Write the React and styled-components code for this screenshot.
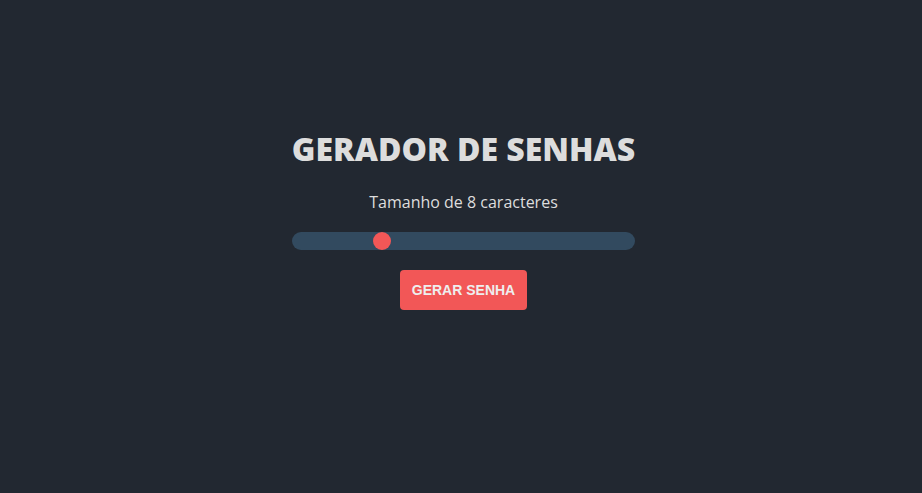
import React, { useState } from "react";
import styled, { createGlobalStyle } from "styled-components";

const Global = createGlobalStyle`
  * { box-sizing: border-box; }
  html, body { margin: 0; padding: 0; }
  body {
    background: #222831;
    font-family: "Open Sans", "Liberation Sans", sans-serif;
    color: #dddddd;
  }
`;

const Page = styled.main`
  min-height: 100vh;
  display: flex;
  align-items: center;
  justify-content: center;
  padding: 0 0 57px 5px;
`;

const Card = styled.section`
  width: 343px;
  display: flex;
  flex-direction: column;
  align-items: center;
`;

const Title = styled.h1`
  margin: 0;
  font-size: 32px;
  font-weight: 800;
  line-height: 44px;
  color: #dddddd;
  white-space: nowrap;
`;

const Label = styled.span`
  margin-top: 20px;
  font-size: 16px;
  line-height: 22px;
  color: #dddddd;
`;

const Slider = styled.input`
  -webkit-appearance: none;
  appearance: none;
  margin: 19px 0 0;
  width: 100%;
  height: 18px;
  border-radius: 9px;
  background: #324a5f;
  outline: none;
  &::-webkit-slider-thumb {
    -webkit-appearance: none;
    width: 18px;
    height: 18px;
    border-radius: 50%;
    background: #f25757;
    border: none;
    cursor: pointer;
  }
  &::-moz-range-thumb {
    width: 18px;
    height: 18px;
    border-radius: 50%;
    background: #f25757;
    border: none;
  }
`;

const Button = styled.button`
  margin-top: 20px;
  width: 127px;
  height: 40px;
  border: none;
  border-radius: 4px;
  background: #f25757;
  color: #eeeeee;
  font-family: "Liberation Sans", Arial, sans-serif;
  font-weight: 700;
  font-size: 14px;
  cursor: pointer;
`;

export default function App() {
  const [size, setSize] = useState(8);
  return (
    <>
      <Global />
      <Page>
        <Card>
          <Title>GERADOR DE SENHAS</Title>
          <Label>Tamanho de {size} caracteres</Label>
          <Slider
            type="range"
            min={4}
            max={20}
            value={size}
            onChange={(e) => setSize(Number(e.target.value))}
          />
          <Button>GERAR SENHA</Button>
        </Card>
      </Page>
    </>
  );
}
